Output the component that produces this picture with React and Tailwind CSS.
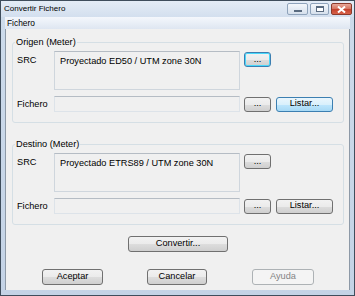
const font = { fontFamily: '"Liberation Sans", Arial, sans-serif' }

function Btn({ children, className = '', variant = 'normal' }) {
  const styles = {
    normal:
      'border-[#707070] bg-[linear-gradient(#f2f2f2_0%,#ebebeb_50%,#dddddd_51%,#cfcfcf_100%)] text-black',
    focus:
      'border-[#3c7fb1] bg-[linear-gradient(#f2f2f2_0%,#ebebeb_50%,#dddddd_51%,#cfcfcf_100%)] text-black shadow-[inset_0_0_0_1px_#48d8fb]',
    hover:
      'border-[#3c7fb1] bg-[linear-gradient(#eaf6fd_0%,#d9f0fc_50%,#bee6fd_51%,#a7d9f5_100%)] text-black',
    disabled: 'border-[#adb2b5] bg-[#f4f4f4] text-[#838383]',
  }
  return (
    <div
      className={`flex items-center justify-center rounded-[3px] border text-[9.2px] leading-none ${styles[variant]} ${className}`}
    >
      {children}
    </div>
  )
}

function Group({ title, src, srcBtn, listBtn }) {
  return (
    <fieldset className="ml-[6px] w-[332px] rounded-[3px] border border-[#d5dfe5] px-0 pb-[10px] pt-0">
      <legend className="ml-[2px] px-[1px] text-[9.2px] leading-[14px] text-black">{title}</legend>
      <div className="mt-[2px] flex items-start pl-[4px]">
        <div className="mt-[2px] w-[37px] text-[9.2px] leading-[14px]">SRC</div>
        <div className="h-[39px] w-[186px] border border-[#cfd6dd] border-t-[#b5bcc4] bg-[#f0f0f0] px-[5px] pt-[2px] text-[9.2px] leading-[14px]">
          {src}
        </div>
        <Btn variant={srcBtn} className="ml-[4px] mt-[1px] h-[15px] w-[27px]">
          ...
        </Btn>
      </div>
      <div className="mt-[6px] flex items-center pl-[4px]">
        <div className="w-[37px] text-[9.2px] leading-[14px]">Fichero</div>
        <div className="h-[16px] w-[186px] border border-[#dde3e9] border-t-[#b5bcc4] bg-[#f0f0f0]" />
        <Btn className="ml-[4px] h-[15px] w-[27px]">...</Btn>
        <Btn variant={listBtn} className="ml-[5px] h-[15px] w-[57px]">
          Listar...
        </Btn>
      </div>
    </fieldset>
  )
}

export default function App() {
  return (
    <div
      style={font}
      className="flex h-[296px] w-[355px] flex-col border border-[#3f4d5c] bg-[linear-gradient(#cddbeb,#c4d3e6)] text-black"
    >
      {/* title bar */}
      <div className="flex h-[16px] items-center justify-between bg-[linear-gradient(#e4ecf6,#d3dfee)] pl-[3px] pr-[2px]">
        <span className="text-[8px] leading-none text-black">Convertir Fichero</span>
        <div className="flex h-[12px] items-start gap-[2px]">
          <div className="flex h-[12px] w-[21px] items-center justify-center rounded-[2px] border border-[#8fa3bb] bg-[linear-gradient(#f4f7fb,#d6e0ec)]">
            <div className="mt-[3px] h-[2px] w-[8px] border border-[#5a6b80] bg-white" />
          </div>
          <div className="flex h-[12px] w-[19px] items-center justify-center rounded-[2px] border border-[#8fa3bb] bg-[linear-gradient(#f4f7fb,#d6e0ec)]">
            <div className="h-[6px] w-[8px] border border-[#5a6b80] border-t-2 bg-white" />
          </div>
          <div className="flex h-[12px] w-[21px] items-center justify-center rounded-[2px] border border-[#8b3a2c] bg-[linear-gradient(#e8a899,#d5705c_50%,#c4402b_51%,#d8624a)]">
            <svg width="9" height="7" viewBox="0 0 9 7">
              <path d="M1 0.5 L8 6.5 M8 0.5 L1 6.5" stroke="white" strokeWidth="2" />
            </svg>
          </div>
        </div>
      </div>

      <div className="flex flex-1 flex-col px-[4px] pb-[5px] pt-0">
        {/* menu bar */}
        <div className="flex h-[12px] items-center bg-[linear-gradient(#f4f7fc,#dee6f1)] pl-[2px]">
          <span className="text-[8.4px] leading-none">Fichero</span>
        </div>

        {/* client area */}
        <div className="flex flex-1 flex-col border-l border-r border-[#8d99a7] bg-[#f0f0f0]">
          <div className="mt-[6px]">
            <Group title="Origen (Meter)" src="Proyectado ED50 / UTM zone 30N" srcBtn="focus" listBtn="hover" />
          </div>
          <div className="mt-[14px]">
            <Group title="Destino (Meter)" src="Proyectado ETRS89 / UTM zone 30N" srcBtn="normal" listBtn="normal" />
          </div>

          <div className="mt-[11px] flex pl-[122px]">
            <Btn className="h-[16px] w-[100px]">Convertir...</Btn>
          </div>

          <div className="mt-[17px] flex pl-[36px]">
            <Btn className="h-[16px] w-[61px]">Aceptar</Btn>
            <Btn className="ml-[44px] h-[16px] w-[60px]">Cancelar</Btn>
            <Btn variant="disabled" className="ml-[45px] h-[16px] w-[62px]">
              Ayuda
            </Btn>
          </div>
        </div>
      </div>
    </div>
  )
}
